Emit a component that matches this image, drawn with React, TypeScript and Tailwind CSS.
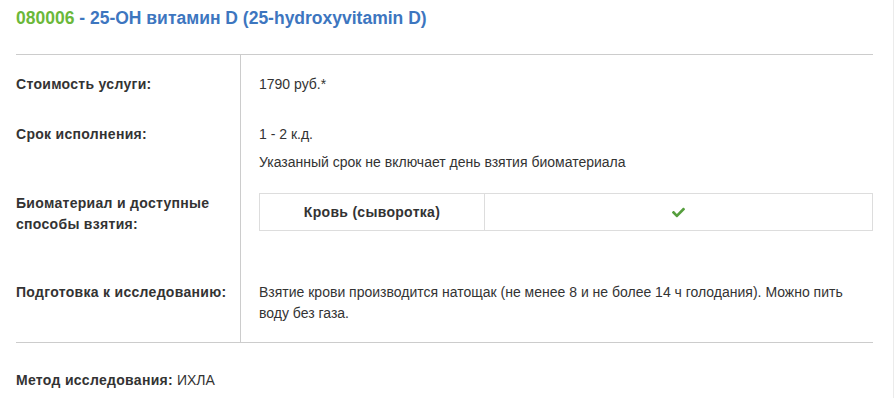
import React from "react";
import { FaCheck } from "react-icons/fa";

export default function App() {
  return (
    <div
      className="w-[894px] h-[398px] bg-white border-r border-[#ebebeb] text-[#333] overflow-hidden"
      style={{ fontFamily: '"Liberation Sans", Arial, sans-serif' }}
    >
      <div className="pl-4 pr-5">
        <h1 className="pt-[8px] text-[17.5px] leading-[20px] font-bold text-[#3d76bf]">
          <span className="text-[#6bb83a]">080006</span> - 25-OH витамин D (25-hydroxyvitamin D)
        </h1>

        <div className="mt-[26px] border-t border-b border-[#cccccc] text-[14px] leading-[21px]">
          {/* Row 1 */}
          <div className="flex">
            <div className="w-[224px] shrink-0 pt-[19px] pb-[10px] font-bold tracking-[0.3px]">Стоимость услуги:</div>
            <div className="flex-1 border-l border-[#cccccc] pl-[18px] pt-[19px] pb-[10px]">1790 руб.*</div>
          </div>
          {/* Row 2 */}
          <div className="flex">
            <div className="w-[224px] shrink-0 pt-[19px] pb-[10px] font-bold tracking-[0.3px]">Срок исполнения:</div>
            <div className="flex-1 border-l border-[#cccccc] pl-[18px] pt-[19px] pb-[10px]">
              <p>1 - 2 к.д.</p>
              <p className="mt-[7px]">Указанный срок не включает день взятия биоматериала</p>
            </div>
          </div>
          {/* Row 3 */}
          <div className="flex">
            <div className="w-[224px] shrink-0 pt-[10px] pb-[28px] font-bold tracking-[0.3px]">
              Биоматериал и доступные
              <br />
              способы взятия:
            </div>
            <div className="flex-1 border-l border-[#cccccc] pl-[18px] pt-[10px] pb-[28px]">
              <div className="flex border border-[#dddddd] h-[38px]">
                <div className="w-[225px] shrink-0 flex items-center justify-center font-bold tracking-[0.3px] border-r border-[#dddddd]">
                  Кровь (сыворотка)
                </div>
                <div className="flex-1 flex items-center justify-center">
                  <FaCheck className="text-[#569e3d] w-[13px] h-[13px]" />
                </div>
              </div>
            </div>
          </div>
          {/* Row 4 */}
          <div className="flex">
            <div className="w-[224px] shrink-0 pt-[19px] pb-[18px] font-bold tracking-[0.3px]">Подготовка к исследованию:</div>
            <div className="flex-1 border-l border-[#cccccc] pl-[18px] pt-[19px] pb-[18px]">
              Взятие крови производится натощак (не менее 8 и не более 14 ч голодания). Можно пить воду без газа.
            </div>
          </div>
        </div>

        <p className="mt-[27px] text-[14px] leading-[21px]">
          <span className="font-bold tracking-[0.3px]">Метод исследования:</span> ИХЛА
        </p>
      </div>
    </div>
  );
}
